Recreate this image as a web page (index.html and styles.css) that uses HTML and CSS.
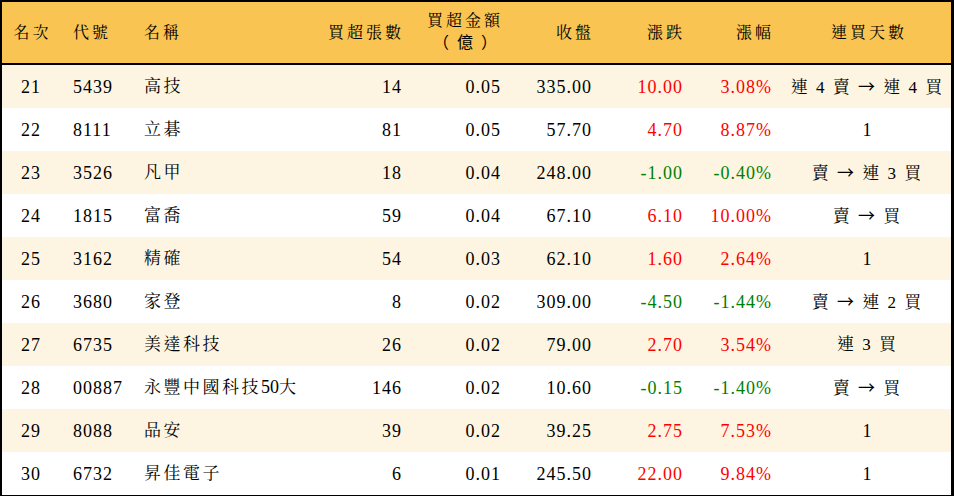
FILE: index.html
```html
<!DOCTYPE html>
<html lang="zh-Hant">
<head>
<meta charset="utf-8">
<link rel="stylesheet" href="styles.css">
</head>
<body>
<table class="rank">
  <colgroup>
    <col class="c1"><col class="c2"><col class="c3"><col class="c4"><col class="c5"><col class="c6"><col class="c7"><col class="c8"><col class="c9">
  </colgroup>
  <thead>
    <tr>
      <th class="center">名次</th>
      <th class="left">代號</th>
      <th class="left">名稱</th>
      <th class="right">買超張數</th>
      <th class="right two">買超金額<br><span class="paren">（億）</span></th>
      <th class="right">收盤</th>
      <th class="right">漲跌</th>
      <th class="right">漲幅</th>
      <th class="center">連買天數</th>
    </tr>
  </thead>
  <tbody>
    <tr class="odd"><td class="center">21</td><td class="left">5439</td><td class="left cjk">高技</td><td class="right">14</td><td class="right">0.05</td><td class="right">335.00</td><td class="right up">10.00</td><td class="right up">3.08%</td><td class="center streak">連 4 賣 <span class="arr">→</span> 連 4 買</td></tr>
    <tr><td class="center">22</td><td class="left">8111</td><td class="left cjk">立碁</td><td class="right">81</td><td class="right">0.05</td><td class="right">57.70</td><td class="right up">4.70</td><td class="right up">8.87%</td><td class="center">1</td></tr>
    <tr class="odd"><td class="center">23</td><td class="left">3526</td><td class="left cjk">凡甲</td><td class="right">18</td><td class="right">0.04</td><td class="right">248.00</td><td class="right down">-1.00</td><td class="right down">-0.40%</td><td class="center streak">賣 <span class="arr">→</span> 連 3 買</td></tr>
    <tr><td class="center">24</td><td class="left">1815</td><td class="left cjk">富喬</td><td class="right">59</td><td class="right">0.04</td><td class="right">67.10</td><td class="right up">6.10</td><td class="right up">10.00%</td><td class="center streak">賣 <span class="arr">→</span> 買</td></tr>
    <tr class="odd"><td class="center">25</td><td class="left">3162</td><td class="left cjk">精確</td><td class="right">54</td><td class="right">0.03</td><td class="right">62.10</td><td class="right up">1.60</td><td class="right up">2.64%</td><td class="center">1</td></tr>
    <tr><td class="center">26</td><td class="left">3680</td><td class="left cjk">家登</td><td class="right">8</td><td class="right">0.02</td><td class="right">309.00</td><td class="right down">-4.50</td><td class="right down">-1.44%</td><td class="center streak">賣 <span class="arr">→</span> 連 2 買</td></tr>
    <tr class="odd"><td class="center">27</td><td class="left">6735</td><td class="left cjk">美達科技</td><td class="right">26</td><td class="right">0.02</td><td class="right">79.00</td><td class="right up">2.70</td><td class="right up">3.54%</td><td class="center streak">連 3 買</td></tr>
    <tr><td class="center">28</td><td class="left">00887</td><td class="left cjk">永豐中國科技<span class="num">50</span>大</td><td class="right">146</td><td class="right">0.02</td><td class="right">10.60</td><td class="right down">-0.15</td><td class="right down">-1.40%</td><td class="center streak">賣 <span class="arr">→</span> 買</td></tr>
    <tr class="odd"><td class="center">29</td><td class="left">8088</td><td class="left cjk">品安</td><td class="right">39</td><td class="right">0.02</td><td class="right">39.25</td><td class="right up">2.75</td><td class="right up">7.53%</td><td class="center">1</td></tr>
    <tr><td class="center">30</td><td class="left">6732</td><td class="left cjk">昇佳電子</td><td class="right">6</td><td class="right">0.01</td><td class="right">245.50</td><td class="right up">22.00</td><td class="right up">9.84%</td><td class="center">1</td></tr>
  </tbody>
</table>
</body>
</html>
```

FILE: styles.css
```css
html, body {
  margin: 0;
  padding: 0;
  background: #ffffff;
}

.rank {
  width: 954px;
  table-layout: fixed;
  border-collapse: separate;
  border-spacing: 0;
  border-top: 2px solid #000;
  border-left: 2px solid #000;
  border-right: 3px solid #000;
  border-bottom: 3px solid #000;
  font-family: "Liberation Serif", "Noto Serif CJK TC", "Noto Sans CJK TC", serif;
  font-size: 16px;
  color: #000;
}

.c1 { width: 58px; }
.c2 { width: 71px; }
.c3 { width: 179px; }
.c4 { width: 104px; }
.c5 { width: 99px; }
.c6 { width: 91px; }
.c7 { width: 91px; }
.c8 { width: 89px; }
.c9 { width: 167px; }

.rank th {
  height: 59px;
  padding: 0 13px;
  background: #f9c452;
  border-bottom: 2px solid #000;
  font-weight: normal;
  letter-spacing: 3px;
  line-height: 20px;
  vertical-align: middle;
  white-space: nowrap;
}

.rank th.right { padding-right: 10px; }
.rank th.center { padding: 0; text-indent: 3px; }

.rank th.two {
  line-height: 21px;
  padding-bottom: 2px;
}

.paren {
  font-family: "Noto Sans CJK TC", sans-serif;
  letter-spacing: 8px;
  margin-right: -2px;
}

.rank td {
  height: 43px;
  padding: 0 12px 0 13px;
  vertical-align: middle;
  white-space: nowrap;
  font-size: 18px;
  letter-spacing: 1px;
  line-height: 20px;
  box-sizing: border-box;
}

.rank td.cjk {
  font-size: 17px;
  letter-spacing: 2.5px;
}

.rank td.cjk .num {
  font-size: 18px;
  letter-spacing: 0;
}

.rank td.center { padding: 0; }

.rank td.streak {
  font-size: 17px;
  letter-spacing: 2px;
}

.arr {
  font-family: "Noto Sans CJK TC", sans-serif;
  font-size: 17px;
  letter-spacing: 2px;
}

.rank tbody tr.odd td { background: #fdf5e1; }

.left { text-align: left; }
.right { text-align: right; }
.center { text-align: center; }

.up { color: #ff0000; }
.down { color: #008000; }
```
